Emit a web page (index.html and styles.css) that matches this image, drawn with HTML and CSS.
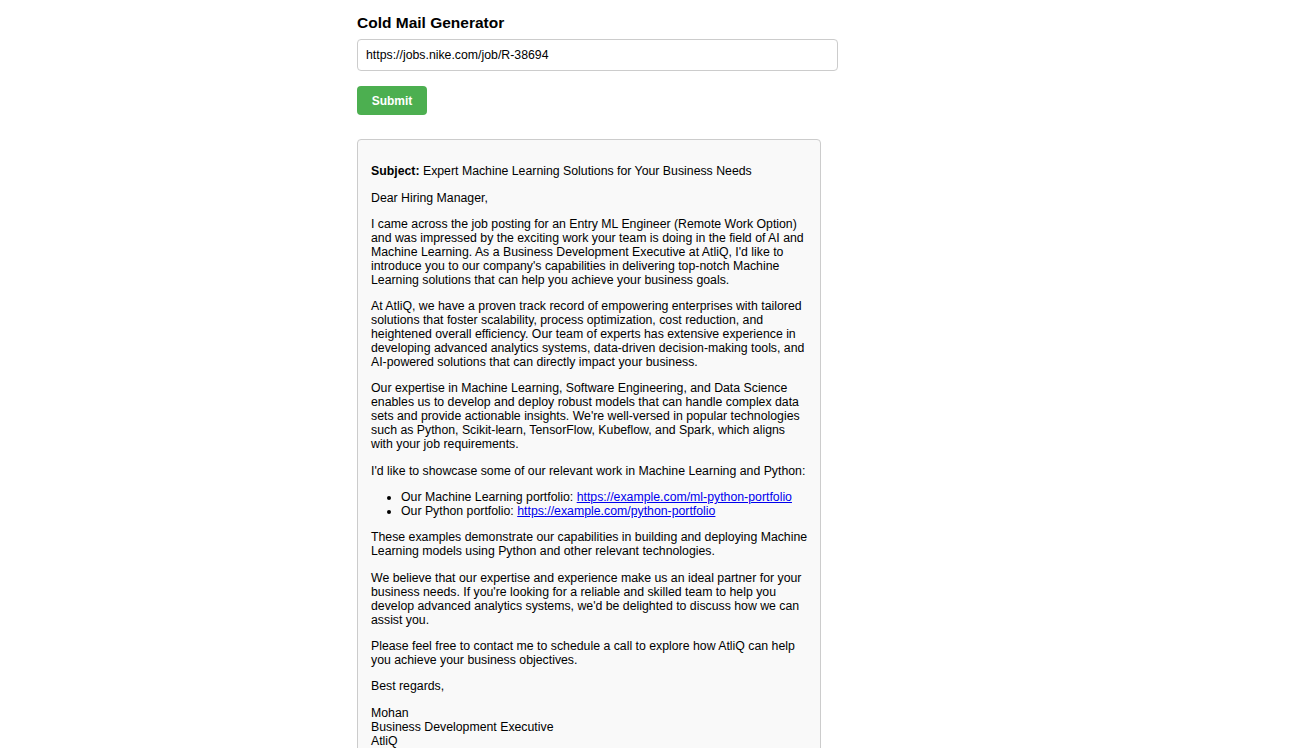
FILE: index.html
```html
<!DOCTYPE html>
<html>
<head>
<meta charset="utf-8">
<title>Cold Mail Generator</title>
<link rel="stylesheet" href="styles.css">
</head>
<body>
<div class="container">
  <h1 class="title">Cold Mail Generator</h1>
  <input class="url-input" type="text" value="https://jobs.nike.com/job/R-38694">
  <button class="submit-btn">Submit</button>
  <div class="output">
    <p><strong>Subject:</strong> Expert Machine Learning Solutions for Your Business Needs</p>
    <p>Dear Hiring Manager,</p>
    <p>I came across the job posting for an Entry ML Engineer (Remote Work Option) and was impressed by the exciting work your team is doing in the field of AI and Machine Learning. As a Business Development Executive at AtliQ, I'd like to introduce you to our company's capabilities in delivering top-notch Machine Learning solutions that can help you achieve your business goals.</p>
    <p>At AtliQ, we have a proven track record of empowering enterprises with tailored solutions that foster scalability, process optimization, cost reduction, and heightened overall efficiency. Our team of experts has extensive experience in developing advanced analytics systems, data-driven decision-making tools, and AI-powered solutions that can directly impact your business.</p>
    <p>Our expertise in Machine Learning, Software Engineering, and Data Science enables us to develop and deploy robust models that can handle complex data sets and provide actionable insights. We're well-versed in popular technologies such as Python, Scikit-learn, TensorFlow, Kubeflow, and Spark, which aligns with your job requirements.</p>
    <p>I'd like to showcase some of our relevant work in Machine Learning and Python:</p>
    <ul>
      <li>Our Machine Learning portfolio: <a href="#">https://example.com/ml-python-portfolio</a></li>
      <li>Our Python portfolio: <a href="#">https://example.com/python-portfolio</a></li>
    </ul>
    <p>These examples demonstrate our capabilities in building and deploying Machine Learning models using Python and other relevant technologies.</p>
    <p>We believe that our expertise and experience make us an ideal partner for your business needs. If you're looking for a reliable and skilled team to help you develop advanced analytics systems, we'd be delighted to discuss how we can assist you.</p>
    <p>Please feel free to contact me to schedule a call to explore how AtliQ can help you achieve your business objectives.</p>
    <p>Best regards,</p>
    <p>Mohan<br>Business Development Executive<br>AtliQ</p>
  </div>
</div>
</body>
</html>
```

FILE: styles.css
```css
html, body {
  margin: 0;
  padding: 0;
  background: #ffffff;
}

body {
  font-family: "Liberation Sans", Arial, sans-serif;
  color: #000;
}

.container {
  width: 601px;
  margin: 0 auto;
  padding-top: 14px;
  display: flex;
  flex-direction: column;
  align-items: flex-start;
}

.title {
  font-size: 15.5px;
  font-weight: bold;
  margin: 0 0 8px 0;
  line-height: 17px;
}

.url-input {
  box-sizing: border-box;
  width: 481px;
  height: 32px;
  border: 1px solid #ccc;
  border-radius: 4px;
  padding: 0 8px;
  font-family: "Liberation Sans", Arial, sans-serif;
  font-size: 12.3px;
  color: #000;
  margin: 0 0 15px 0;
  outline: none;
}

.submit-btn {
  box-sizing: border-box;
  width: 70px;
  height: 29px;
  background: #4caf50;
  color: #fff;
  border: none;
  border-radius: 4px;
  font-family: "Liberation Sans", Arial, sans-serif;
  font-size: 12px;
  font-weight: bold;
  padding: 0;
  margin: 0 0 24px 0;
  cursor: pointer;
}

.output {
  box-sizing: border-box;
  width: 464px;
  background: #f9f9f9;
  border: 1px solid #ccc;
  border-radius: 4px;
  padding: 12px 11px 10px 13px;
  font-size: 12.3px;
  line-height: 14px;
}

.output p {
  margin: 12.3px 0;
}

.output ul {
  margin: 12.3px 0;
  padding-left: 30px;
}

.output a {
  color: #0000ee;
  text-decoration: underline;
}
```
